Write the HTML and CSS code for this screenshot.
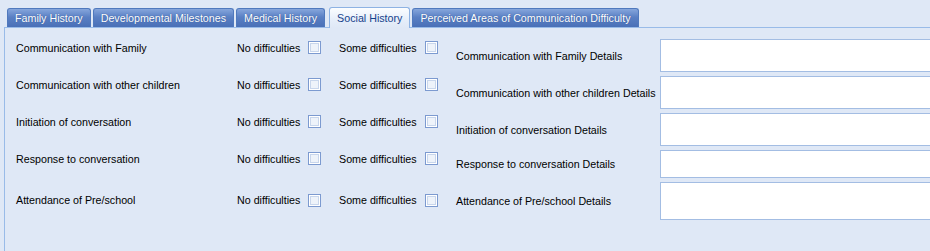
FILE: index.html
```html
<!DOCTYPE html>
<html>
<head>
<meta charset="UTF-8">
<title>Social History</title>
<link rel="stylesheet" href="styles.css">
</head>
<body>
<div class="panel">
  <div class="tabs">
    <span class="tab">Family History</span>
    <span class="tab">Developmental Milestones</span>
    <span class="tab">Medical History</span>
    <span class="tab active">Social History</span>
    <span class="tab">Perceived Areas of Communication Difficulty</span>
  </div>
  <div class="body">
    <div class="left">
      <div class="row"><span class="lbl">Communication with Family</span><label class="opt">No difficulties <input type="checkbox" class="cb"></label><label class="opt some">Some difficulties <input type="checkbox" class="cb"></label></div>
      <div class="row"><span class="lbl">Communication with other children</span><label class="opt">No difficulties <input type="checkbox" class="cb"></label><label class="opt some">Some difficulties <input type="checkbox" class="cb"></label></div>
      <div class="row"><span class="lbl">Initiation of conversation</span><label class="opt">No difficulties <input type="checkbox" class="cb"></label><label class="opt some">Some difficulties <input type="checkbox" class="cb"></label></div>
      <div class="row"><span class="lbl">Response to conversation</span><label class="opt">No difficulties <input type="checkbox" class="cb"></label><label class="opt some">Some difficulties <input type="checkbox" class="cb"></label></div>
      <div class="row last"><span class="lbl">Attendance of Pre/school</span><label class="opt">No difficulties <input type="checkbox" class="cb"></label><label class="opt some">Some difficulties <input type="checkbox" class="cb"></label></div>
    </div>
    <div class="right">
      <div class="drow"><span class="lbl">Communication with Family Details</span><textarea class="txt"></textarea></div>
      <div class="drow"><span class="lbl">Communication with other children Details</span><textarea class="txt"></textarea></div>
      <div class="drow"><span class="lbl">Initiation of conversation Details</span><textarea class="txt"></textarea></div>
      <div class="drow"><span class="lbl">Response to conversation Details</span><textarea class="txt short"></textarea></div>
      <div class="drow"><span class="lbl">Attendance of Pre/school Details</span><textarea class="txt tall"></textarea></div>
    </div>
  </div>
</div>
</body>
</html>
```

FILE: styles.css
```css
html,body{margin:0;height:100%;overflow:hidden}
body{background-color:#dfe8f6;font-family:"Liberation Sans",Arial,sans-serif;font-size:10.7px;color:#000}
.panel{margin-left:4px;height:100%;display:flex;flex-direction:column}
.tabs{display:flex;align-items:flex-end;gap:2px;padding:7px 0 0 3px;border-bottom:1px solid #99bbe8;height:20px;flex:none}
.tab{height:18px;line-height:18px;padding:0 7px;color:#fff;text-shadow:0 0 1px #2b4f8f;white-space:nowrap;border:1px solid #5079bd;border-bottom:0;border-radius:3px 3px 0 0;background:linear-gradient(#86a6dc,#5a80c4 45%,#4a70b7)}
.tab.active{line-height:20px;margin-left:2px;color:#15428b;text-shadow:none;border-color:#8db2e3;background:linear-gradient(#fbfdff,#e6eefa 60%,#dfe8f6);margin-bottom:-1px;height:20px}
.body{display:flex;border-left:1px solid #99bbe8;flex:1}
.left{flex:none;display:grid;grid-template-rows:37px 37px 37px 37px 46px;padding:1px 0 0 11px;width:440px;align-content:start}
.row{display:grid;grid-template-columns:221px 102px auto;align-items:center;white-space:nowrap}
.opt{display:flex;align-items:center;gap:8px}
.cb{appearance:none;-webkit-appearance:none;margin:0;width:13px;height:13px;border:1px solid #7c9ad0;background:#eef3fa;box-shadow:inset 0 0 0 1px #fff,inset 0 0 0 2px #c8d6ec}
.right{flex:none;display:flex;flex-direction:column;gap:4px;padding-top:11px}
.drow{display:grid;grid-template-columns:204px 300px;align-items:center;white-space:nowrap}
.txt{box-sizing:border-box;height:33px;margin:0;border:1px solid #a3bde3;background:#fff;resize:none;display:block}
.txt.short{height:28px}
.txt.tall{height:38px}
```
